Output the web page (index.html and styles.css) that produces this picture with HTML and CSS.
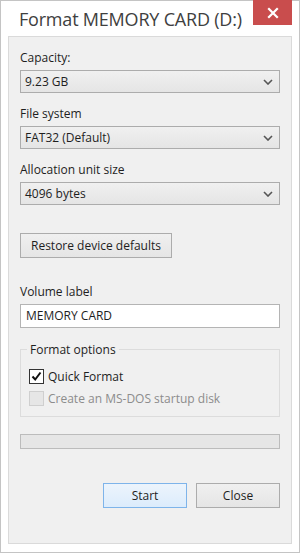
FILE: index.html
```html
<!DOCTYPE html>
<html>
<head>
<meta charset="utf-8">
<link rel="stylesheet" href="styles.css">
</head>
<body>
<div class="window">
  <div class="titlebar">
    <div class="title">Format MEMORY CARD (D:)</div>
    <div class="close">
      <svg width="12" height="12" viewBox="0 0 12 12"><path d="M2 2 L10 10 M10 2 L2 10" stroke="#fff" stroke-width="2.2" stroke-linecap="square"/></svg>
    </div>
  </div>
  <div class="panel">
    <div class="label first">Capacity:</div>
    <div class="select"><span>9.23 GB</span><svg class="chev" width="10" height="6" viewBox="0 0 10 6"><path d="M1 1 L5 5 L9 1" fill="none" stroke="#555" stroke-width="1.6"/></svg></div>
    <div class="label">File system</div>
    <div class="select"><span>FAT32 (Default)</span><svg class="chev" width="10" height="6" viewBox="0 0 10 6"><path d="M1 1 L5 5 L9 1" fill="none" stroke="#555" stroke-width="1.6"/></svg></div>
    <div class="label">Allocation unit size</div>
    <div class="select"><span>4096 bytes</span><svg class="chev" width="10" height="6" viewBox="0 0 10 6"><path d="M1 1 L5 5 L9 1" fill="none" stroke="#555" stroke-width="1.6"/></svg></div>
    <div class="restore">Restore device defaults</div>
    <div class="label vol">Volume label</div>
    <div class="input">MEMORY CARD</div>
    <div class="fieldset">
      <div class="legend">Format options</div>
      <div class="check">
        <div class="box"><svg width="13" height="13" viewBox="0 0 13 13"><path d="M2.5 6.5 L5.2 9.5 L10.5 2.5" fill="none" stroke="#111" stroke-width="2"/></svg></div>
        <span>Quick Format</span>
      </div>
      <div class="check disabled">
        <div class="box"></div>
        <span>Create an MS-DOS startup disk</span>
      </div>
    </div>
    <div class="progress"></div>
    <div class="buttons">
      <div class="btn primary">Start</div>
      <div class="btn">Close</div>
    </div>
  </div>
</div>
</body>
</html>
```
FILE: styles.css
```css
* { box-sizing: border-box; }
html, body { margin: 0; padding: 0; background: #fff; }
body { font-family: "Open Sans", "Noto Sans", sans-serif; font-size: 12px; color: #1e1e1e; }
.window {
  width: 300px; height: 553px;
  border: 1px solid #c4c4c4;
  background: #fff;
  padding: 0 7px;
  display: flex; flex-direction: column;
}
.titlebar { height: 35px; display: flex; justify-content: space-between; align-items: flex-start; }
.title { font-size: 18px; color: #404040; padding: 6px 0 0 11px; letter-spacing: -0.2px; white-space: nowrap; }
.close {
  width: 39px; height: 25px; background: #c94d4d; margin-top: -1px;
  display: flex; align-items: center; justify-content: center;
}
.panel {
  width: 284px; height: 508px;
  background: #f0f0f0; border: 1px solid #dadada;
  padding: 0 11px;
  display: flex; flex-direction: column;
}
.label { height: 17px; line-height: 17px; margin-top: 12px; margin-bottom: 4px; }
.select {
  height: 23px; border: 1px solid #acacac;
  background: linear-gradient(#f0f0f0, #e5e5e5);
  display: flex; align-items: center; justify-content: space-between;
  padding: 0 6px 0 4px;
}
.chev { margin-top: 1px; }
.restore {
  margin-top: 28px; width: 152px; height: 25px;
  border: 1px solid #acacac; background: linear-gradient(#f0f0f0, #e5e5e5);
  display: flex; align-items: center; justify-content: center;
}
.label.vol { margin-top: 25px; }
.input {
  height: 24px; border: 1px solid #b4b4b4; background: #fff;
  padding: 0 5px; line-height: 22px;
}
.fieldset {
  margin-top: 21px; height: 68px;
  border: 1px solid #dcdcdc; position: relative;
  padding: 12px 0 0 8px;
}
.legend {
  position: absolute; top: -9px; left: 6px; padding: 0 3px;
  background: #f0f0f0; line-height: 17px;
}
.check { display: flex; align-items: center; height: 15px; margin-top: 7px; }
.box {
  width: 15px; height: 15px; border: 1px solid #333; background: #fff;
  margin-right: 4px; display: flex; align-items: center; justify-content: center;
}
.check.disabled { color: #8c8c8c; }
.check.disabled .box { border-color: #cfcfcf; background: #e6e6e6; }
.progress {
  margin-top: 17px; height: 15px; border: 1px solid #bcbcbc; background: #e6e6e6;
}
.buttons { margin-top: 34px; display: flex; justify-content: flex-end; gap: 9px; }
.btn {
  width: 84px; height: 25px; border: 1px solid #acacac;
  background: linear-gradient(#f0f0f0, #e5e5e5);
  display: flex; align-items: center; justify-content: center;
}
.btn.primary { border-color: #7eb4ea; background: linear-gradient(#ecf4fc, #dcecfc); }
```
